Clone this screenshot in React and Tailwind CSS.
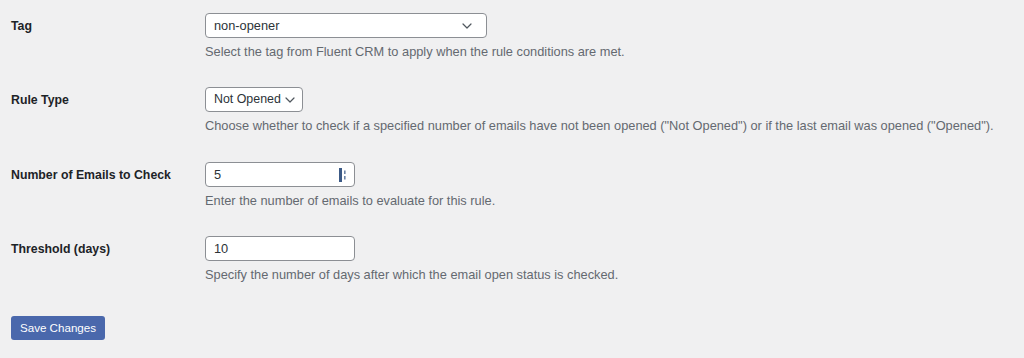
import React from 'react';

const Chevron = () => (
    <svg width="10" height="6" viewBox="0 0 10 6" fill="none" className="shrink-0">
        <path d="M1 1l4 4 4-4" stroke="#50575e" strokeWidth="1.2" strokeLinecap="round" strokeLinejoin="round" />
    </svg>
);

const Spinner = () => (
    <svg width="8" height="14" viewBox="0 0 8 14" className="shrink-0">
        <rect x="0" y="0" width="3" height="14" fill="#3c5a86" />
        <rect x="5" y="2.5" width="1.6" height="3.5" fill="#6f86a8" />
        <rect x="5" y="8" width="1.6" height="3.5" fill="#6f86a8" />
    </svg>
);

const Row = ({ label, children, description, last }) => (
    <div className={`flex ${last ? 'mb-[29px]' : 'mb-[28px]'}`}>
        <div className="w-[194px] h-[25px] pt-[2px] flex items-center font-bold text-[12.3px] text-[#1d2327]">{label}</div>
        <div>
            {children}
            <p className="mt-[6px] text-[12.8px] leading-[15px] text-[#646970]">{description}</p>
        </div>
    </div>
);

const boxClass = 'h-[25px] bg-white border border-[#8c8f94] rounded-[4px] flex items-center text-[12.8px] text-[#2c3338]';

export default function App() {
    return (
        <div className="min-h-[358px] bg-[#f0f0f1] pl-[11px] pt-[13px] font-['Liberation_Sans',Arial,sans-serif]">
            <Row label="Tag" description="Select the tag from Fluent CRM to apply when the rule conditions are met.">
                <div className={`${boxClass} w-[282px] pl-[8px] pr-[14px] justify-between`}>
                    <span>non-opener</span>
                    <Chevron />
                </div>
            </Row>
            <Row
                label="Rule Type"
                description={'Choose whether to check if a specified number of emails have not been opened ("Not Opened") or if the last email was opened ("Opened").'}
            >
                <div className={`${boxClass} w-[98px] pl-[8px] pr-[7px] justify-between`}>
                    <span className="text-[12.4px]">Not Opened</span>
                    <Chevron />
                </div>
            </Row>
            <div className="pt-px">
                <Row label="Number of Emails to Check" description="Enter the number of emails to evaluate for this rule.">
                    <div className={`${boxClass} w-[150px] pl-[8px] pr-[7px] justify-between`}>
                        <span>5</span>
                        <Spinner />
                    </div>
                </Row>
                <Row label="Threshold (days)" description="Specify the number of days after which the email open status is checked." last>
                    <div className={`${boxClass} w-[150px] pl-[8px]`}>
                        <span>10</span>
                    </div>
                </Row>
            </div>
            <button className="mt-[5px] w-[94px] h-[24px] rounded-[3px] bg-[#4a68ac] text-white text-[11.6px] font-medium">
                Save Changes
            </button>
        </div>
    );
}
